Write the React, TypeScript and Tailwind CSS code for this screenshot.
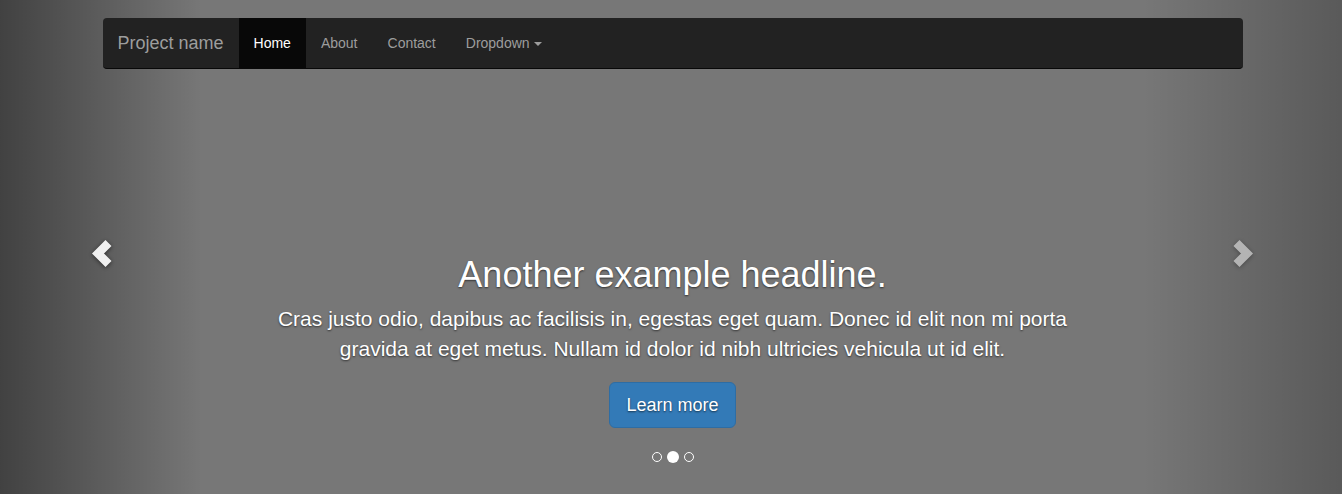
import React from 'react';

const navItems = ['Home', 'About', 'Contact'];

const Chevron = ({ dir }: { dir: 'left' | 'right' }) => (
  <svg
    width="24"
    height="30"
    viewBox="0 0 24 30"
    className="[filter:drop-shadow(0_1px_2px_rgba(0,0,0,0.6))]"
    aria-hidden="true"
  >
    <polyline
      points={dir === 'left' ? '18.5,4 8,14.5 18.5,25' : '5.5,4 16,14.5 5.5,25'}
      fill="none"
      stroke="#fff"
      strokeWidth="8.5"
      strokeLinejoin="miter"
      strokeLinecap="butt"
    />
  </svg>
);

const Navbar = () => (
  <div className="absolute inset-x-0 top-[18px] z-20 flex justify-center">
    <nav className="flex h-[51px] w-[1140px] items-start rounded-[4px] border-b border-[#080808] bg-[#222] text-[14px] leading-[20px]">
      <a className="px-[15px] py-[15px] text-[18px] text-[#9d9d9d]">Project name</a>
      {navItems.map((item, i) => (
        <a
          key={item}
          className={
            i === 0
              ? 'bg-[#080808] px-[15px] py-[15px] text-white'
              : 'px-[15px] py-[15px] text-[#9d9d9d]'
          }
        >
          {item}
        </a>
      ))}
      <a className="flex items-center px-[15px] py-[15px] text-[#9d9d9d]">
        Dropdown
        <span className="ml-[4px] mt-[1px] h-0 w-0 border-x-[4px] border-t-[4px] border-x-transparent border-t-[#9d9d9d]" />
      </a>
    </nav>
  </div>
);

export default function App() {
  return (
    <div className="relative h-[494px] w-full overflow-hidden bg-[#777] font-['Liberation_Sans',Arial,sans-serif]">
      <div className="relative h-[500px] w-[1345px]">
        <Navbar />

        <div className="flex h-full">
          {/* left control (hovered) */}
          <div className="flex w-[15%] items-center justify-center bg-[linear-gradient(to_right,rgba(0,0,0,0.45),rgba(0,0,0,0))]">
            <div className="ml-[2px] mt-[8px] opacity-90">
              <Chevron dir="left" />
            </div>
          </div>

          <div className="flex flex-1 flex-col items-center justify-end px-[67px] pb-[50px] text-center text-white [text-shadow:0_1px_2px_rgba(0,0,0,0.6)]">
            <h1 className="mb-[10px] text-[36px] leading-[1.1]">Another example headline.</h1>
            <p className="mb-[19px] text-[21px] leading-[1.4]">
              Cras justo odio, dapibus ac facilisis in, egestas eget quam. Donec id elit non mi porta
              gravida at eget metus. Nullam id dolor id nibh ultricies vehicula ut id elit.
            </p>
            <a className="mb-[22px] flex h-[46px] items-center rounded-[6px] border border-[#2e6da4] bg-[#337ab7] px-[16px] text-[18px] text-white">
              Learn more
            </a>
          </div>

          {/* right control */}
          <div className="flex w-[15%] items-center justify-center bg-[linear-gradient(to_left,rgba(0,0,0,0.25),rgba(0,0,0,0))]">
            <div className="mr-[2px] mt-[8px] opacity-50">
              <Chevron dir="right" />
            </div>
          </div>
        </div>

        <ol className="absolute inset-x-0 top-[451px] z-10 flex h-[12px] items-center justify-center gap-[4px]">
          <li className="m-[1px] h-[10px] w-[10px] rounded-full border border-white" />
          <li className="h-[12px] w-[12px] rounded-full bg-white" />
          <li className="m-[1px] h-[10px] w-[10px] rounded-full border border-white" />
        </ol>
      </div>
    </div>
  );
}
